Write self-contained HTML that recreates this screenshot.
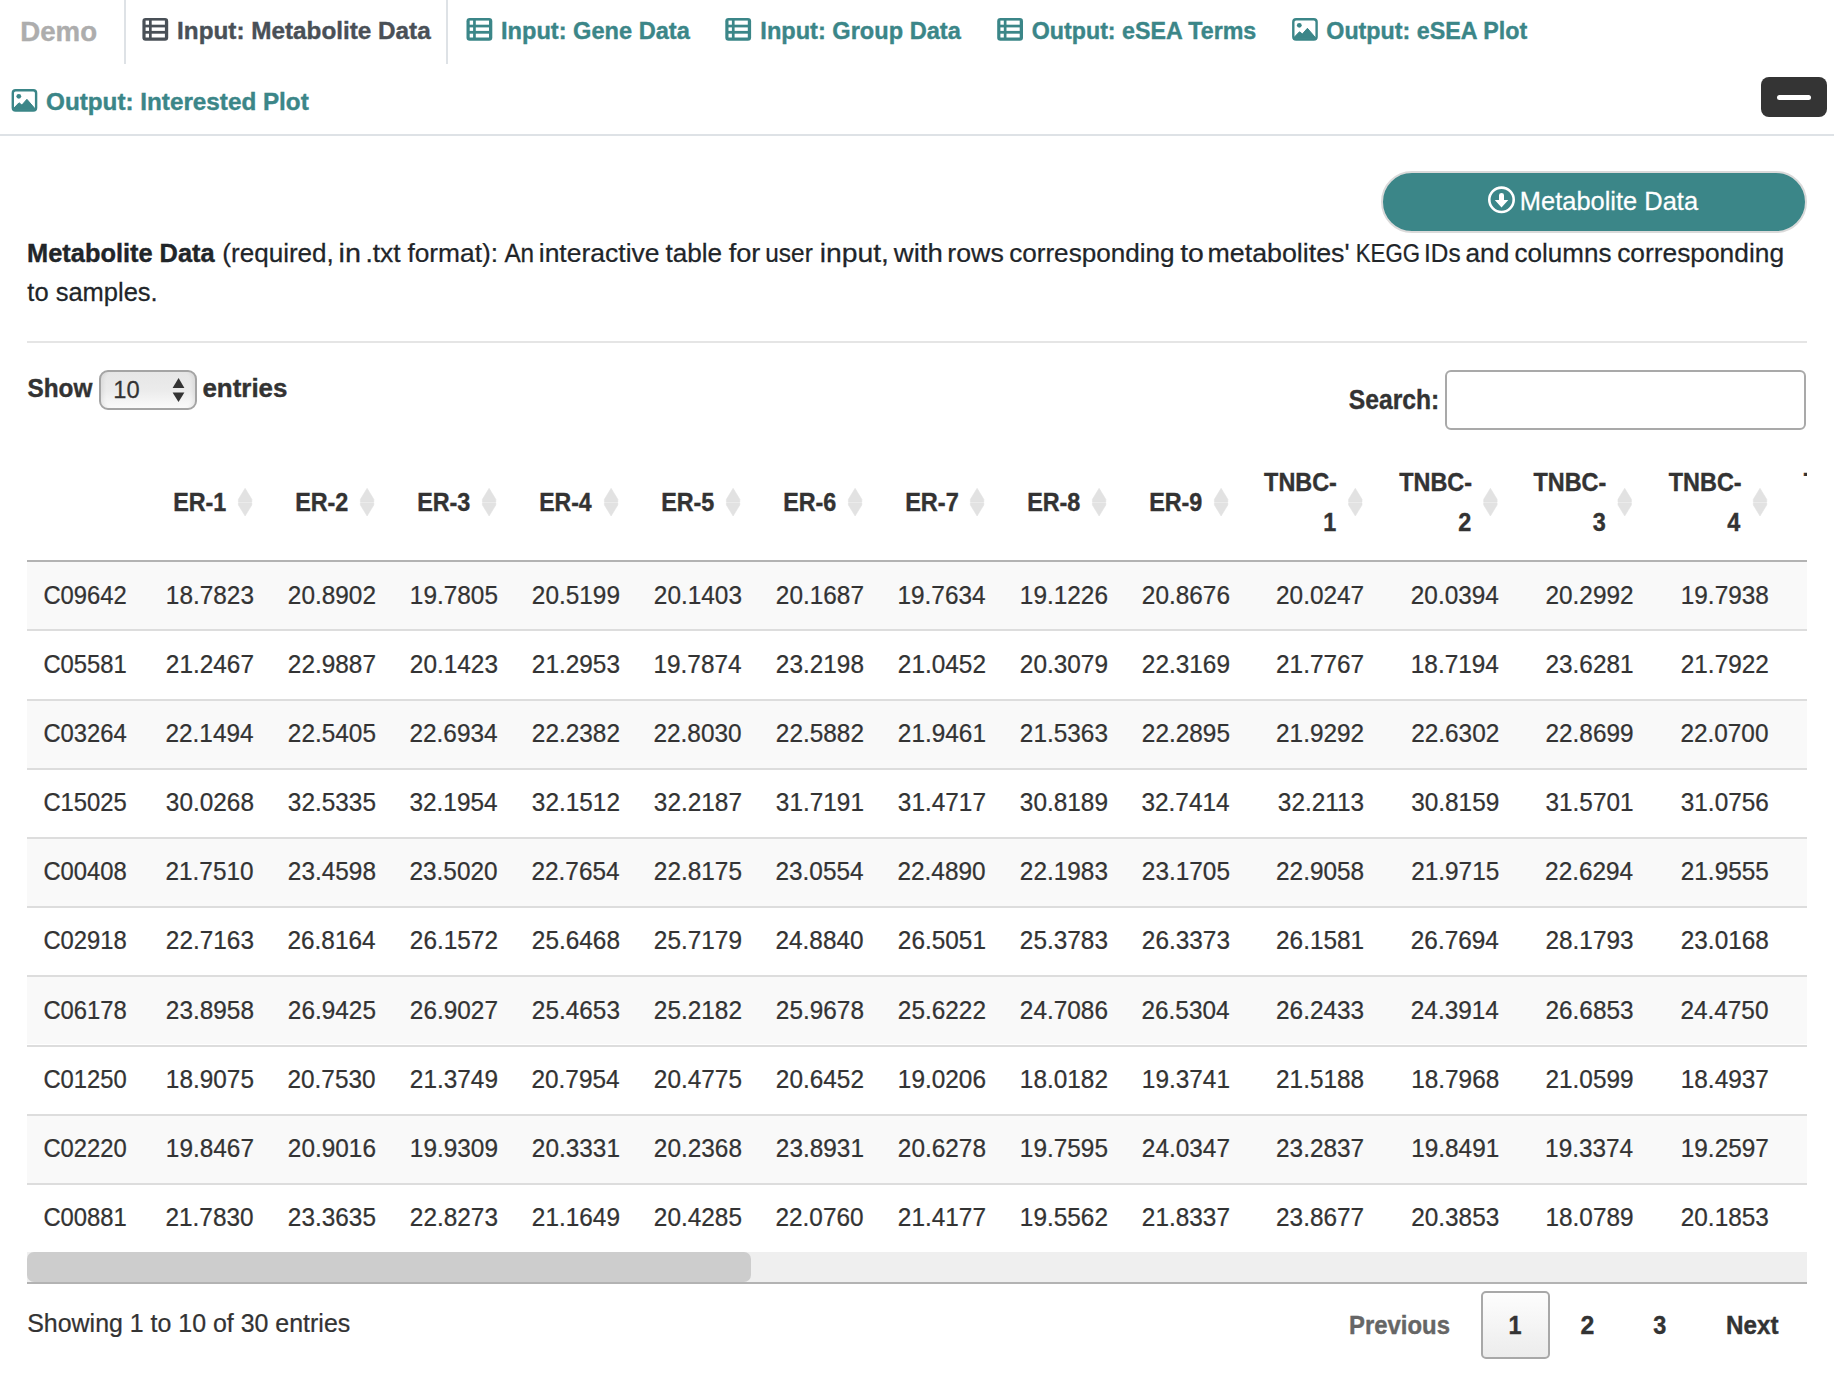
<!DOCTYPE html>
<html><head><meta charset="utf-8"><title>Metabolite Data</title>
<style>
html,body{margin:0;padding:0;background:#fff;}
body{width:1834px;height:1376px;position:relative;overflow:hidden;font-family:"Liberation Sans",sans-serif;}
.abs{position:absolute;}
.tabb{position:absolute;top:0;width:2px;height:63.5px;background:#dee2e6;}
.hdrline{position:absolute;left:0;top:134px;width:1834px;height:2px;background:#dee2e6;}
.minus{position:absolute;left:1761px;top:77px;width:66px;height:40px;border-radius:8px;background:#343434;}
.minus i{position:absolute;left:16px;top:18px;width:33.5px;height:5.2px;border-radius:3px;background:#fff;}
.dl{position:absolute;left:1381px;top:170.5px;width:426px;height:62.5px;box-sizing:border-box;border-radius:32px;background:#3b8688;border:2px solid #dadada;}
.hr{position:absolute;left:27px;top:341px;width:1780px;height:2px;background:#e5e5e5;}
.sel{position:absolute;left:99.3px;top:370px;width:97.3px;height:39.5px;box-sizing:border-box;border:2px solid #a4a4a4;border-radius:9px;background:linear-gradient(#e6e6e6,#ebebeb 50%,#fafafa);box-shadow:inset 5px 0 4px -3px rgba(0,0,0,0.07), inset -5px 0 4px -3px rgba(0,0,0,0.07);}
.search{position:absolute;left:1444.6px;top:370.4px;width:361.6px;height:59.6px;box-sizing:border-box;border:2px solid #a9a9a9;border-radius:6px;background:#fff;}
.thl{position:absolute;left:27px;top:560px;width:1780px;height:2px;background:#b3b3b3;}
.st{position:absolute;left:27px;width:1780px;background:#f9f9f9;}
.rl{position:absolute;left:27px;width:1780px;height:2px;background:#dddddd;}
.track{position:absolute;left:27px;top:1252px;width:1780px;height:30px;background:#efefef;}
.thumb{position:absolute;left:27px;top:1252px;width:724px;height:29.5px;border-radius:7px;background:#cdcdcd;}
.sbl{position:absolute;left:27px;top:1282px;width:1780px;height:2px;background:#b3b3b3;}
.pg1{position:absolute;left:1481px;top:1291px;width:68.5px;height:67.5px;box-sizing:border-box;border:2px solid #a8a8a8;border-radius:5px;background:linear-gradient(#fdfdfd,#ececec);}
svg{position:absolute;left:0;top:0;}
</style></head>
<body>
<div class="tabb" style="left:124px"></div>
<div class="tabb" style="left:446px"></div>
<div class="minus"><i></i></div>
<div class="hdrline"></div>
<div class="dl"></div>
<div class="hr"></div>
<div class="sel"></div>
<div class="search"></div>
<div class="st" style="top:562.0px;height:67.3px"></div><div class="st" style="top:700.5px;height:67.2px"></div><div class="st" style="top:838.9px;height:67.2px"></div><div class="st" style="top:977.3px;height:67.2px"></div><div class="st" style="top:1115.7px;height:67.2px"></div>
<div class="rl" style="top:629.3px"></div><div class="rl" style="top:698.5px"></div><div class="rl" style="top:767.7px"></div><div class="rl" style="top:836.9px"></div><div class="rl" style="top:906.1px"></div><div class="rl" style="top:975.3px"></div><div class="rl" style="top:1044.5px"></div><div class="rl" style="top:1113.7px"></div><div class="rl" style="top:1182.9px"></div>
<div class="thl"></div>
<div class="track"></div>
<div class="thumb"></div>
<div class="sbl"></div>
<div class="pg1"></div>
<svg width="1834" height="1376" viewBox="0 0 1834 1376" font-family="'Liberation Sans', sans-serif">
<defs><clipPath id="tblclip"><rect x="27" y="440" width="1780" height="820"/></clipPath></defs>
<g transform="translate(142.4 18)"><rect x="0" y="0" width="25.8" height="22.7" rx="3.2" fill="#495057"/><g fill="#fff"><rect x="3.2" y="2.6" width="3.4" height="4.1"/><rect x="9.3" y="2.6" width="13.2" height="4.1"/><rect x="3.2" y="9.4" width="3.4" height="3.5"/><rect x="9.3" y="9.4" width="13.2" height="3.5"/><rect x="3.2" y="15.7" width="3.4" height="3.8"/><rect x="9.3" y="15.7" width="13.2" height="3.8"/></g></g>
<g transform="translate(466.5 18)"><rect x="0" y="0" width="25.8" height="22.7" rx="3.2" fill="#3b8688"/><g fill="#fff"><rect x="3.2" y="2.6" width="3.4" height="4.1"/><rect x="9.3" y="2.6" width="13.2" height="4.1"/><rect x="3.2" y="9.4" width="3.4" height="3.5"/><rect x="9.3" y="9.4" width="13.2" height="3.5"/><rect x="3.2" y="15.7" width="3.4" height="3.8"/><rect x="9.3" y="15.7" width="13.2" height="3.8"/></g></g>
<g transform="translate(725.3 18)"><rect x="0" y="0" width="25.8" height="22.7" rx="3.2" fill="#3b8688"/><g fill="#fff"><rect x="3.2" y="2.6" width="3.4" height="4.1"/><rect x="9.3" y="2.6" width="13.2" height="4.1"/><rect x="3.2" y="9.4" width="3.4" height="3.5"/><rect x="9.3" y="9.4" width="13.2" height="3.5"/><rect x="3.2" y="15.7" width="3.4" height="3.8"/><rect x="9.3" y="15.7" width="13.2" height="3.8"/></g></g>
<g transform="translate(997.2 18)"><rect x="0" y="0" width="25.8" height="22.7" rx="3.2" fill="#3b8688"/><g fill="#fff"><rect x="3.2" y="2.6" width="3.4" height="4.1"/><rect x="9.3" y="2.6" width="13.2" height="4.1"/><rect x="3.2" y="9.4" width="3.4" height="3.5"/><rect x="9.3" y="9.4" width="13.2" height="3.5"/><rect x="3.2" y="15.7" width="3.4" height="3.8"/><rect x="9.3" y="15.7" width="13.2" height="3.8"/></g></g>
<g transform="translate(1292.1 18.0)"><rect x="1.2" y="1.2" width="23.3" height="20.3" rx="2.8" fill="none" stroke="#3b8688" stroke-width="2.4"/><circle cx="7.2" cy="7.3" r="2.4" fill="#3b8688"/><path d="M1.6 20.8 L1.8 19.6 L7.4 13.8 L10.3 16.0 L15.3 10.3 L23.3 19.6 L23.5 20.8 Z" fill="#3b8688" stroke="#3b8688" stroke-width="1" stroke-linejoin="round"/></g>
<g transform="translate(11.6 89.0)"><rect x="1.2" y="1.2" width="23.3" height="20.3" rx="2.8" fill="none" stroke="#3b8688" stroke-width="2.4"/><circle cx="7.2" cy="7.3" r="2.4" fill="#3b8688"/><path d="M1.6 20.8 L1.8 19.6 L7.4 13.8 L10.3 16.0 L15.3 10.3 L23.3 19.6 L23.5 20.8 Z" fill="#3b8688" stroke="#3b8688" stroke-width="1" stroke-linejoin="round"/></g>
<g fill="#fff"><circle cx="1501.5" cy="199.8" r="12.2" fill="none" stroke="#fff" stroke-width="2.6"/><path d="M1499 195.2 Q1499 192.9 1501.5 192.9 Q1504 192.9 1504 195.2 L1504 200 L1508.3 200 L1501.5 207.6 L1494.8 200 L1499 200 Z"/></g>
<path d="M178.6 387.9 L172.6 387.9 L178.6 378 L184.4 387.9 Z" fill="#333"/>
<path d="M172.6 392.4 L184.4 392.4 L178.5 402 Z" fill="#333"/>
<path d="M245.1 488.3 L251.8 499.3 L251.8 502 L238.4 502 L238.4 499.3 Z M238.4 502.8 L251.8 502.8 L251.8 505 L245.1 516 L238.4 505 Z" fill="#e2e2e2" stroke="#e2e2e2" stroke-width="0.6" stroke-linejoin="round"/><path d="M367.1 488.3 L373.8 499.3 L373.8 502 L360.4 502 L360.4 499.3 Z M360.4 502.8 L373.8 502.8 L373.8 505 L367.1 516 L360.4 505 Z" fill="#e2e2e2" stroke="#e2e2e2" stroke-width="0.6" stroke-linejoin="round"/><path d="M489.1 488.3 L495.8 499.3 L495.8 502 L482.4 502 L482.4 499.3 Z M482.4 502.8 L495.8 502.8 L495.8 505 L489.1 516 L482.4 505 Z" fill="#e2e2e2" stroke="#e2e2e2" stroke-width="0.6" stroke-linejoin="round"/><path d="M611.1 488.3 L617.8 499.3 L617.8 502 L604.4 502 L604.4 499.3 Z M604.4 502.8 L617.8 502.8 L617.8 505 L611.1 516 L604.4 505 Z" fill="#e2e2e2" stroke="#e2e2e2" stroke-width="0.6" stroke-linejoin="round"/><path d="M733.1 488.3 L739.8 499.3 L739.8 502 L726.4 502 L726.4 499.3 Z M726.4 502.8 L739.8 502.8 L739.8 505 L733.1 516 L726.4 505 Z" fill="#e2e2e2" stroke="#e2e2e2" stroke-width="0.6" stroke-linejoin="round"/><path d="M855.1 488.3 L861.8 499.3 L861.8 502 L848.4 502 L848.4 499.3 Z M848.4 502.8 L861.8 502.8 L861.8 505 L855.1 516 L848.4 505 Z" fill="#e2e2e2" stroke="#e2e2e2" stroke-width="0.6" stroke-linejoin="round"/><path d="M977.1 488.3 L983.8 499.3 L983.8 502 L970.4 502 L970.4 499.3 Z M970.4 502.8 L983.8 502.8 L983.8 505 L977.1 516 L970.4 505 Z" fill="#e2e2e2" stroke="#e2e2e2" stroke-width="0.6" stroke-linejoin="round"/><path d="M1099.1 488.3 L1105.8 499.3 L1105.8 502 L1092.4 502 L1092.4 499.3 Z M1092.4 502.8 L1105.8 502.8 L1105.8 505 L1099.1 516 L1092.4 505 Z" fill="#e2e2e2" stroke="#e2e2e2" stroke-width="0.6" stroke-linejoin="round"/><path d="M1221.1 488.3 L1227.8 499.3 L1227.8 502 L1214.4 502 L1214.4 499.3 Z M1214.4 502.8 L1227.8 502.8 L1227.8 505 L1221.1 516 L1214.4 505 Z" fill="#e2e2e2" stroke="#e2e2e2" stroke-width="0.6" stroke-linejoin="round"/><path d="M1355.3 488.3 L1362.0 499.3 L1362.0 502 L1348.6 502 L1348.6 499.3 Z M1348.6 502.8 L1362.0 502.8 L1362.0 505 L1355.3 516 L1348.6 505 Z" fill="#e2e2e2" stroke="#e2e2e2" stroke-width="0.6" stroke-linejoin="round"/><path d="M1490.4 488.3 L1497.1 499.3 L1497.1 502 L1483.7 502 L1483.7 499.3 Z M1483.7 502.8 L1497.1 502.8 L1497.1 505 L1490.4 516 L1483.7 505 Z" fill="#e2e2e2" stroke="#e2e2e2" stroke-width="0.6" stroke-linejoin="round"/><path d="M1624.7 488.3 L1631.4 499.3 L1631.4 502 L1618.0 502 L1618.0 499.3 Z M1618.0 502.8 L1631.4 502.8 L1631.4 505 L1624.7 516 L1618.0 505 Z" fill="#e2e2e2" stroke="#e2e2e2" stroke-width="0.6" stroke-linejoin="round"/><path d="M1760.0 488.3 L1766.7 499.3 L1766.7 502 L1753.3 502 L1753.3 499.3 Z M1753.3 502.8 L1766.7 502.8 L1766.7 505 L1760.0 516 L1753.3 505 Z" fill="#e2e2e2" stroke="#e2e2e2" stroke-width="0.6" stroke-linejoin="round"/>
<text transform="translate(20.27 40.60) scale(0.9919 1)" font-size="27.88" font-weight="bold" fill="#adadad" stroke="#adadad" stroke-width="0.40">Demo</text>
<text transform="translate(177.08 39.30) scale(0.9873 1)" font-size="24.61" font-weight="bold" fill="#495057" stroke="#495057" stroke-width="0.40">Input: Metabolite Data</text>
<text transform="translate(501.02 39.30) scale(0.9591 1)" font-size="24.61" font-weight="bold" fill="#3b8688" stroke="#3b8688" stroke-width="0.40">Input: Gene Data</text>
<text transform="translate(760.33 39.30) scale(0.9588 1)" font-size="24.61" font-weight="bold" fill="#3b8688" stroke="#3b8688" stroke-width="0.40">Input: Group Data</text>
<text transform="translate(1031.77 39.30) scale(0.9441 1)" font-size="24.61" font-weight="bold" fill="#3b8688" stroke="#3b8688" stroke-width="0.40">Output: eSEA Terms</text>
<text transform="translate(1326.27 39.30) scale(0.9465 1)" font-size="24.61" font-weight="bold" fill="#3b8688" stroke="#3b8688" stroke-width="0.40">Output: eSEA Plot</text>
<text transform="translate(46.04 109.80) scale(0.9861 1)" font-size="24.61" font-weight="bold" fill="#3b8688" stroke="#3b8688" stroke-width="0.40">Output: Interested Plot</text>
<text transform="translate(1519.81 209.80) scale(0.9950 1)" font-size="25.60" font-weight="normal" fill="#ffffff" stroke="#ffffff" stroke-width="0.25">Metabolite Data</text>
<text transform="translate(27.11 262.00) scale(0.9700 1)" font-size="26.17" font-weight="bold" fill="#212529" stroke="#212529" stroke-width="0.40">Metabolite Data</text>
<text transform="translate(222.28 262.00) scale(0.9969 1)" font-size="26.17" font-weight="normal" fill="#212529" stroke="#212529" stroke-width="0.25">(required,</text>
<text transform="translate(338.60 262.00) scale(1.1004 1)" font-size="26.17" font-weight="normal" fill="#212529" stroke="#212529" stroke-width="0.25">in</text>
<text transform="translate(365.43 262.00) scale(1.0107 1)" font-size="26.17" font-weight="normal" fill="#212529" stroke="#212529" stroke-width="0.25">.txt</text>
<text transform="translate(407.40 262.00) scale(1.0057 1)" font-size="26.17" font-weight="normal" fill="#212529" stroke="#212529" stroke-width="0.25">format):</text>
<text transform="translate(504.40 262.00) scale(0.9298 1)" font-size="26.17" font-weight="normal" fill="#212529" stroke="#212529" stroke-width="0.25">An</text>
<text transform="translate(538.74 262.00) scale(1.0129 1)" font-size="26.17" font-weight="normal" fill="#212529" stroke="#212529" stroke-width="0.25">interactive</text>
<text transform="translate(665.40 262.00) scale(0.9983 1)" font-size="26.17" font-weight="normal" fill="#212529" stroke="#212529" stroke-width="0.25">table</text>
<text transform="translate(728.70 262.00) scale(1.0389 1)" font-size="26.17" font-weight="normal" fill="#212529" stroke="#212529" stroke-width="0.25">for</text>
<text transform="translate(765.27 262.00) scale(0.9338 1)" font-size="26.17" font-weight="normal" fill="#212529" stroke="#212529" stroke-width="0.25">user</text>
<text transform="translate(819.63 262.00) scale(1.0821 1)" font-size="26.17" font-weight="normal" fill="#212529" stroke="#212529" stroke-width="0.25">input,</text>
<text transform="translate(893.73 262.00) scale(1.0553 1)" font-size="26.17" font-weight="normal" fill="#212529" stroke="#212529" stroke-width="0.25">with</text>
<text transform="translate(947.33 262.00) scale(1.0226 1)" font-size="26.17" font-weight="normal" fill="#212529" stroke="#212529" stroke-width="0.25">rows</text>
<text transform="translate(1009.18 262.00) scale(0.9976 1)" font-size="26.17" font-weight="normal" fill="#212529" stroke="#212529" stroke-width="0.25">corresponding</text>
<text transform="translate(1180.20 262.00) scale(1.0834 1)" font-size="26.17" font-weight="normal" fill="#212529" stroke="#212529" stroke-width="0.25">to</text>
<text transform="translate(1207.53 262.00) scale(1.0236 1)" font-size="26.17" font-weight="normal" fill="#212529" stroke="#212529" stroke-width="0.25">metabolites&#x27;</text>
<text transform="translate(1355.76 262.00) scale(0.8502 1)" font-size="26.17" font-weight="normal" fill="#212529" stroke="#212529" stroke-width="0.25">KEGG</text>
<text transform="translate(1424.10 262.00) scale(0.9286 1)" font-size="26.17" font-weight="normal" fill="#212529" stroke="#212529" stroke-width="0.25">IDs</text>
<text transform="translate(1465.48 262.00) scale(1.0029 1)" font-size="26.17" font-weight="normal" fill="#212529" stroke="#212529" stroke-width="0.25">and</text>
<text transform="translate(1514.59 262.00) scale(0.9945 1)" font-size="26.17" font-weight="normal" fill="#212529" stroke="#212529" stroke-width="0.25">columns</text>
<text transform="translate(1617.18 262.00) scale(1.0062 1)" font-size="26.17" font-weight="normal" fill="#212529" stroke="#212529" stroke-width="0.25">corresponding</text>
<text transform="translate(27.30 301.40) scale(0.9751 1)" font-size="26.17" font-weight="normal" fill="#212529" stroke="#212529" stroke-width="0.25">to samples.</text>
<text transform="translate(27.52 397.40) scale(0.9401 1)" font-size="25.89" font-weight="bold" fill="#333333" stroke="#333333" stroke-width="0.40">Show</text>
<text transform="translate(113.22 397.90) scale(0.9579 1)" font-size="24.75" font-weight="normal" fill="#333333" stroke="#333333" stroke-width="0.25">10</text>
<text transform="translate(202.39 397.40) scale(1.0019 1)" font-size="25.89" font-weight="bold" fill="#333333" stroke="#333333" stroke-width="0.40">entries</text>
<text transform="translate(1348.81 408.60) scale(0.9121 1)" font-size="27.03" font-weight="bold" fill="#333333" stroke="#333333" stroke-width="0.40">Search:</text>
<text transform="translate(173.14 511.30) scale(0.9127 1)" font-size="25.60" font-weight="bold" fill="#333333" stroke="#333333" stroke-width="0.40">ER-1</text>
<text transform="translate(295.14 511.30) scale(0.9127 1)" font-size="25.60" font-weight="bold" fill="#333333" stroke="#333333" stroke-width="0.40">ER-2</text>
<text transform="translate(417.14 511.30) scale(0.9127 1)" font-size="25.60" font-weight="bold" fill="#333333" stroke="#333333" stroke-width="0.40">ER-3</text>
<text transform="translate(539.16 511.30) scale(0.8999 1)" font-size="25.60" font-weight="bold" fill="#333333" stroke="#333333" stroke-width="0.40">ER-4</text>
<text transform="translate(661.14 511.30) scale(0.9127 1)" font-size="25.60" font-weight="bold" fill="#333333" stroke="#333333" stroke-width="0.40">ER-5</text>
<text transform="translate(783.14 511.30) scale(0.9127 1)" font-size="25.60" font-weight="bold" fill="#333333" stroke="#333333" stroke-width="0.40">ER-6</text>
<text transform="translate(905.13 511.30) scale(0.9193 1)" font-size="25.60" font-weight="bold" fill="#333333" stroke="#333333" stroke-width="0.40">ER-7</text>
<text transform="translate(1027.14 511.30) scale(0.9127 1)" font-size="25.60" font-weight="bold" fill="#333333" stroke="#333333" stroke-width="0.40">ER-8</text>
<text transform="translate(1149.14 511.30) scale(0.9127 1)" font-size="25.60" font-weight="bold" fill="#333333" stroke="#333333" stroke-width="0.40">ER-9</text>
<g clip-path="url(#tblclip)"><text transform="translate(1264.10 490.80) scale(0.9147 1)" font-size="25.60" font-weight="bold" fill="#333333" stroke="#333333" stroke-width="0.40">TNBC-</text></g>
<text transform="translate(1323.26 530.70) scale(0.9147 1)" font-size="25.60" font-weight="bold" fill="#333333" stroke="#333333" stroke-width="0.40">1</text>
<g clip-path="url(#tblclip)"><text transform="translate(1399.20 490.80) scale(0.9147 1)" font-size="25.60" font-weight="bold" fill="#333333" stroke="#333333" stroke-width="0.40">TNBC-</text></g>
<text transform="translate(1458.36 530.70) scale(0.9147 1)" font-size="25.60" font-weight="bold" fill="#333333" stroke="#333333" stroke-width="0.40">2</text>
<g clip-path="url(#tblclip)"><text transform="translate(1533.50 490.80) scale(0.9147 1)" font-size="25.60" font-weight="bold" fill="#333333" stroke="#333333" stroke-width="0.40">TNBC-</text></g>
<text transform="translate(1592.66 530.70) scale(0.9147 1)" font-size="25.60" font-weight="bold" fill="#333333" stroke="#333333" stroke-width="0.40">3</text>
<g clip-path="url(#tblclip)"><text transform="translate(1668.80 490.80) scale(0.9147 1)" font-size="25.60" font-weight="bold" fill="#333333" stroke="#333333" stroke-width="0.40">TNBC-</text></g>
<text transform="translate(1727.23 530.70) scale(0.9147 1)" font-size="25.60" font-weight="bold" fill="#333333" stroke="#333333" stroke-width="0.40">4</text>
<g clip-path="url(#tblclip)"><text transform="translate(1803.80 490.80) scale(0.9147 1)" font-size="25.60" font-weight="bold" fill="#333333" stroke="#333333" stroke-width="0.40">TNBC-</text></g>
<text transform="translate(43.38 603.70) scale(0.9401 1)" font-size="25.32" font-weight="normal" fill="#333333" stroke="#333333" stroke-width="0.25">C09642</text>
<text transform="translate(165.86 603.70) scale(0.9629 1)" font-size="25.32" font-weight="normal" fill="#333333" stroke="#333333" stroke-width="0.25">18.7823</text>
<text transform="translate(287.86 603.70) scale(0.9629 1)" font-size="25.32" font-weight="normal" fill="#333333" stroke="#333333" stroke-width="0.25">20.8902</text>
<text transform="translate(409.86 603.70) scale(0.9629 1)" font-size="25.32" font-weight="normal" fill="#333333" stroke="#333333" stroke-width="0.25">19.7805</text>
<text transform="translate(531.86 603.70) scale(0.9629 1)" font-size="25.32" font-weight="normal" fill="#333333" stroke="#333333" stroke-width="0.25">20.5199</text>
<text transform="translate(653.86 603.70) scale(0.9629 1)" font-size="25.32" font-weight="normal" fill="#333333" stroke="#333333" stroke-width="0.25">20.1403</text>
<text transform="translate(775.86 603.70) scale(0.9629 1)" font-size="25.32" font-weight="normal" fill="#333333" stroke="#333333" stroke-width="0.25">20.1687</text>
<text transform="translate(897.48 603.70) scale(0.9629 1)" font-size="25.32" font-weight="normal" fill="#333333" stroke="#333333" stroke-width="0.25">19.7634</text>
<text transform="translate(1019.86 603.70) scale(0.9629 1)" font-size="25.32" font-weight="normal" fill="#333333" stroke="#333333" stroke-width="0.25">19.1226</text>
<text transform="translate(1141.86 603.70) scale(0.9629 1)" font-size="25.32" font-weight="normal" fill="#333333" stroke="#333333" stroke-width="0.25">20.8676</text>
<text transform="translate(1276.06 603.70) scale(0.9629 1)" font-size="25.32" font-weight="normal" fill="#333333" stroke="#333333" stroke-width="0.25">20.0247</text>
<text transform="translate(1410.78 603.70) scale(0.9629 1)" font-size="25.32" font-weight="normal" fill="#333333" stroke="#333333" stroke-width="0.25">20.0394</text>
<text transform="translate(1545.46 603.70) scale(0.9629 1)" font-size="25.32" font-weight="normal" fill="#333333" stroke="#333333" stroke-width="0.25">20.2992</text>
<text transform="translate(1680.76 603.70) scale(0.9629 1)" font-size="25.32" font-weight="normal" fill="#333333" stroke="#333333" stroke-width="0.25">19.7938</text>
<text transform="translate(43.38 672.85) scale(0.9401 1)" font-size="25.32" font-weight="normal" fill="#333333" stroke="#333333" stroke-width="0.25">C05581</text>
<text transform="translate(165.86 672.85) scale(0.9629 1)" font-size="25.32" font-weight="normal" fill="#333333" stroke="#333333" stroke-width="0.25">21.2467</text>
<text transform="translate(287.86 672.85) scale(0.9629 1)" font-size="25.32" font-weight="normal" fill="#333333" stroke="#333333" stroke-width="0.25">22.9887</text>
<text transform="translate(409.86 672.85) scale(0.9629 1)" font-size="25.32" font-weight="normal" fill="#333333" stroke="#333333" stroke-width="0.25">20.1423</text>
<text transform="translate(531.86 672.85) scale(0.9629 1)" font-size="25.32" font-weight="normal" fill="#333333" stroke="#333333" stroke-width="0.25">21.2953</text>
<text transform="translate(653.48 672.85) scale(0.9629 1)" font-size="25.32" font-weight="normal" fill="#333333" stroke="#333333" stroke-width="0.25">19.7874</text>
<text transform="translate(775.86 672.85) scale(0.9629 1)" font-size="25.32" font-weight="normal" fill="#333333" stroke="#333333" stroke-width="0.25">23.2198</text>
<text transform="translate(897.86 672.85) scale(0.9629 1)" font-size="25.32" font-weight="normal" fill="#333333" stroke="#333333" stroke-width="0.25">21.0452</text>
<text transform="translate(1019.86 672.85) scale(0.9629 1)" font-size="25.32" font-weight="normal" fill="#333333" stroke="#333333" stroke-width="0.25">20.3079</text>
<text transform="translate(1141.86 672.85) scale(0.9629 1)" font-size="25.32" font-weight="normal" fill="#333333" stroke="#333333" stroke-width="0.25">22.3169</text>
<text transform="translate(1276.06 672.85) scale(0.9629 1)" font-size="25.32" font-weight="normal" fill="#333333" stroke="#333333" stroke-width="0.25">21.7767</text>
<text transform="translate(1410.78 672.85) scale(0.9629 1)" font-size="25.32" font-weight="normal" fill="#333333" stroke="#333333" stroke-width="0.25">18.7194</text>
<text transform="translate(1545.46 672.85) scale(0.9629 1)" font-size="25.32" font-weight="normal" fill="#333333" stroke="#333333" stroke-width="0.25">23.6281</text>
<text transform="translate(1680.76 672.85) scale(0.9629 1)" font-size="25.32" font-weight="normal" fill="#333333" stroke="#333333" stroke-width="0.25">21.7922</text>
<text transform="translate(43.38 742.00) scale(0.9401 1)" font-size="25.32" font-weight="normal" fill="#333333" stroke="#333333" stroke-width="0.25">C03264</text>
<text transform="translate(165.48 742.00) scale(0.9629 1)" font-size="25.32" font-weight="normal" fill="#333333" stroke="#333333" stroke-width="0.25">22.1494</text>
<text transform="translate(287.86 742.00) scale(0.9629 1)" font-size="25.32" font-weight="normal" fill="#333333" stroke="#333333" stroke-width="0.25">22.5405</text>
<text transform="translate(409.48 742.00) scale(0.9629 1)" font-size="25.32" font-weight="normal" fill="#333333" stroke="#333333" stroke-width="0.25">22.6934</text>
<text transform="translate(531.86 742.00) scale(0.9629 1)" font-size="25.32" font-weight="normal" fill="#333333" stroke="#333333" stroke-width="0.25">22.2382</text>
<text transform="translate(653.48 742.00) scale(0.9629 1)" font-size="25.32" font-weight="normal" fill="#333333" stroke="#333333" stroke-width="0.25">22.8030</text>
<text transform="translate(775.86 742.00) scale(0.9629 1)" font-size="25.32" font-weight="normal" fill="#333333" stroke="#333333" stroke-width="0.25">22.5882</text>
<text transform="translate(897.86 742.00) scale(0.9629 1)" font-size="25.32" font-weight="normal" fill="#333333" stroke="#333333" stroke-width="0.25">21.9461</text>
<text transform="translate(1019.86 742.00) scale(0.9629 1)" font-size="25.32" font-weight="normal" fill="#333333" stroke="#333333" stroke-width="0.25">21.5363</text>
<text transform="translate(1141.86 742.00) scale(0.9629 1)" font-size="25.32" font-weight="normal" fill="#333333" stroke="#333333" stroke-width="0.25">22.2895</text>
<text transform="translate(1276.06 742.00) scale(0.9629 1)" font-size="25.32" font-weight="normal" fill="#333333" stroke="#333333" stroke-width="0.25">21.9292</text>
<text transform="translate(1411.16 742.00) scale(0.9629 1)" font-size="25.32" font-weight="normal" fill="#333333" stroke="#333333" stroke-width="0.25">22.6302</text>
<text transform="translate(1545.46 742.00) scale(0.9629 1)" font-size="25.32" font-weight="normal" fill="#333333" stroke="#333333" stroke-width="0.25">22.8699</text>
<text transform="translate(1680.38 742.00) scale(0.9629 1)" font-size="25.32" font-weight="normal" fill="#333333" stroke="#333333" stroke-width="0.25">22.0700</text>
<text transform="translate(43.38 811.15) scale(0.9401 1)" font-size="25.32" font-weight="normal" fill="#333333" stroke="#333333" stroke-width="0.25">C15025</text>
<text transform="translate(165.86 811.15) scale(0.9629 1)" font-size="25.32" font-weight="normal" fill="#333333" stroke="#333333" stroke-width="0.25">30.0268</text>
<text transform="translate(287.86 811.15) scale(0.9629 1)" font-size="25.32" font-weight="normal" fill="#333333" stroke="#333333" stroke-width="0.25">32.5335</text>
<text transform="translate(409.48 811.15) scale(0.9629 1)" font-size="25.32" font-weight="normal" fill="#333333" stroke="#333333" stroke-width="0.25">32.1954</text>
<text transform="translate(531.86 811.15) scale(0.9629 1)" font-size="25.32" font-weight="normal" fill="#333333" stroke="#333333" stroke-width="0.25">32.1512</text>
<text transform="translate(653.86 811.15) scale(0.9629 1)" font-size="25.32" font-weight="normal" fill="#333333" stroke="#333333" stroke-width="0.25">32.2187</text>
<text transform="translate(775.86 811.15) scale(0.9629 1)" font-size="25.32" font-weight="normal" fill="#333333" stroke="#333333" stroke-width="0.25">31.7191</text>
<text transform="translate(897.86 811.15) scale(0.9629 1)" font-size="25.32" font-weight="normal" fill="#333333" stroke="#333333" stroke-width="0.25">31.4717</text>
<text transform="translate(1019.86 811.15) scale(0.9629 1)" font-size="25.32" font-weight="normal" fill="#333333" stroke="#333333" stroke-width="0.25">30.8189</text>
<text transform="translate(1141.48 811.15) scale(0.9629 1)" font-size="25.32" font-weight="normal" fill="#333333" stroke="#333333" stroke-width="0.25">32.7414</text>
<text transform="translate(1277.87 811.15) scale(0.9629 1)" font-size="25.32" font-weight="normal" fill="#333333" stroke="#333333" stroke-width="0.25">32.2113</text>
<text transform="translate(1411.16 811.15) scale(0.9629 1)" font-size="25.32" font-weight="normal" fill="#333333" stroke="#333333" stroke-width="0.25">30.8159</text>
<text transform="translate(1545.46 811.15) scale(0.9629 1)" font-size="25.32" font-weight="normal" fill="#333333" stroke="#333333" stroke-width="0.25">31.5701</text>
<text transform="translate(1680.76 811.15) scale(0.9629 1)" font-size="25.32" font-weight="normal" fill="#333333" stroke="#333333" stroke-width="0.25">31.0756</text>
<text transform="translate(43.38 880.30) scale(0.9401 1)" font-size="25.32" font-weight="normal" fill="#333333" stroke="#333333" stroke-width="0.25">C00408</text>
<text transform="translate(165.48 880.30) scale(0.9629 1)" font-size="25.32" font-weight="normal" fill="#333333" stroke="#333333" stroke-width="0.25">21.7510</text>
<text transform="translate(287.86 880.30) scale(0.9629 1)" font-size="25.32" font-weight="normal" fill="#333333" stroke="#333333" stroke-width="0.25">23.4598</text>
<text transform="translate(409.48 880.30) scale(0.9629 1)" font-size="25.32" font-weight="normal" fill="#333333" stroke="#333333" stroke-width="0.25">23.5020</text>
<text transform="translate(531.48 880.30) scale(0.9629 1)" font-size="25.32" font-weight="normal" fill="#333333" stroke="#333333" stroke-width="0.25">22.7654</text>
<text transform="translate(653.86 880.30) scale(0.9629 1)" font-size="25.32" font-weight="normal" fill="#333333" stroke="#333333" stroke-width="0.25">22.8175</text>
<text transform="translate(775.48 880.30) scale(0.9629 1)" font-size="25.32" font-weight="normal" fill="#333333" stroke="#333333" stroke-width="0.25">23.0554</text>
<text transform="translate(897.48 880.30) scale(0.9629 1)" font-size="25.32" font-weight="normal" fill="#333333" stroke="#333333" stroke-width="0.25">22.4890</text>
<text transform="translate(1019.86 880.30) scale(0.9629 1)" font-size="25.32" font-weight="normal" fill="#333333" stroke="#333333" stroke-width="0.25">22.1983</text>
<text transform="translate(1141.86 880.30) scale(0.9629 1)" font-size="25.32" font-weight="normal" fill="#333333" stroke="#333333" stroke-width="0.25">23.1705</text>
<text transform="translate(1276.06 880.30) scale(0.9629 1)" font-size="25.32" font-weight="normal" fill="#333333" stroke="#333333" stroke-width="0.25">22.9058</text>
<text transform="translate(1411.16 880.30) scale(0.9629 1)" font-size="25.32" font-weight="normal" fill="#333333" stroke="#333333" stroke-width="0.25">21.9715</text>
<text transform="translate(1545.08 880.30) scale(0.9629 1)" font-size="25.32" font-weight="normal" fill="#333333" stroke="#333333" stroke-width="0.25">22.6294</text>
<text transform="translate(1680.76 880.30) scale(0.9629 1)" font-size="25.32" font-weight="normal" fill="#333333" stroke="#333333" stroke-width="0.25">21.9555</text>
<text transform="translate(43.38 949.45) scale(0.9401 1)" font-size="25.32" font-weight="normal" fill="#333333" stroke="#333333" stroke-width="0.25">C02918</text>
<text transform="translate(165.86 949.45) scale(0.9629 1)" font-size="25.32" font-weight="normal" fill="#333333" stroke="#333333" stroke-width="0.25">22.7163</text>
<text transform="translate(287.48 949.45) scale(0.9629 1)" font-size="25.32" font-weight="normal" fill="#333333" stroke="#333333" stroke-width="0.25">26.8164</text>
<text transform="translate(409.86 949.45) scale(0.9629 1)" font-size="25.32" font-weight="normal" fill="#333333" stroke="#333333" stroke-width="0.25">26.1572</text>
<text transform="translate(531.86 949.45) scale(0.9629 1)" font-size="25.32" font-weight="normal" fill="#333333" stroke="#333333" stroke-width="0.25">25.6468</text>
<text transform="translate(653.86 949.45) scale(0.9629 1)" font-size="25.32" font-weight="normal" fill="#333333" stroke="#333333" stroke-width="0.25">25.7179</text>
<text transform="translate(775.48 949.45) scale(0.9629 1)" font-size="25.32" font-weight="normal" fill="#333333" stroke="#333333" stroke-width="0.25">24.8840</text>
<text transform="translate(897.86 949.45) scale(0.9629 1)" font-size="25.32" font-weight="normal" fill="#333333" stroke="#333333" stroke-width="0.25">26.5051</text>
<text transform="translate(1019.86 949.45) scale(0.9629 1)" font-size="25.32" font-weight="normal" fill="#333333" stroke="#333333" stroke-width="0.25">25.3783</text>
<text transform="translate(1141.86 949.45) scale(0.9629 1)" font-size="25.32" font-weight="normal" fill="#333333" stroke="#333333" stroke-width="0.25">26.3373</text>
<text transform="translate(1276.06 949.45) scale(0.9629 1)" font-size="25.32" font-weight="normal" fill="#333333" stroke="#333333" stroke-width="0.25">26.1581</text>
<text transform="translate(1410.78 949.45) scale(0.9629 1)" font-size="25.32" font-weight="normal" fill="#333333" stroke="#333333" stroke-width="0.25">26.7694</text>
<text transform="translate(1545.46 949.45) scale(0.9629 1)" font-size="25.32" font-weight="normal" fill="#333333" stroke="#333333" stroke-width="0.25">28.1793</text>
<text transform="translate(1680.76 949.45) scale(0.9629 1)" font-size="25.32" font-weight="normal" fill="#333333" stroke="#333333" stroke-width="0.25">23.0168</text>
<text transform="translate(43.38 1018.60) scale(0.9401 1)" font-size="25.32" font-weight="normal" fill="#333333" stroke="#333333" stroke-width="0.25">C06178</text>
<text transform="translate(165.86 1018.60) scale(0.9629 1)" font-size="25.32" font-weight="normal" fill="#333333" stroke="#333333" stroke-width="0.25">23.8958</text>
<text transform="translate(287.86 1018.60) scale(0.9629 1)" font-size="25.32" font-weight="normal" fill="#333333" stroke="#333333" stroke-width="0.25">26.9425</text>
<text transform="translate(409.86 1018.60) scale(0.9629 1)" font-size="25.32" font-weight="normal" fill="#333333" stroke="#333333" stroke-width="0.25">26.9027</text>
<text transform="translate(531.86 1018.60) scale(0.9629 1)" font-size="25.32" font-weight="normal" fill="#333333" stroke="#333333" stroke-width="0.25">25.4653</text>
<text transform="translate(653.86 1018.60) scale(0.9629 1)" font-size="25.32" font-weight="normal" fill="#333333" stroke="#333333" stroke-width="0.25">25.2182</text>
<text transform="translate(775.86 1018.60) scale(0.9629 1)" font-size="25.32" font-weight="normal" fill="#333333" stroke="#333333" stroke-width="0.25">25.9678</text>
<text transform="translate(897.86 1018.60) scale(0.9629 1)" font-size="25.32" font-weight="normal" fill="#333333" stroke="#333333" stroke-width="0.25">25.6222</text>
<text transform="translate(1019.86 1018.60) scale(0.9629 1)" font-size="25.32" font-weight="normal" fill="#333333" stroke="#333333" stroke-width="0.25">24.7086</text>
<text transform="translate(1141.48 1018.60) scale(0.9629 1)" font-size="25.32" font-weight="normal" fill="#333333" stroke="#333333" stroke-width="0.25">26.5304</text>
<text transform="translate(1276.06 1018.60) scale(0.9629 1)" font-size="25.32" font-weight="normal" fill="#333333" stroke="#333333" stroke-width="0.25">26.2433</text>
<text transform="translate(1410.78 1018.60) scale(0.9629 1)" font-size="25.32" font-weight="normal" fill="#333333" stroke="#333333" stroke-width="0.25">24.3914</text>
<text transform="translate(1545.46 1018.60) scale(0.9629 1)" font-size="25.32" font-weight="normal" fill="#333333" stroke="#333333" stroke-width="0.25">26.6853</text>
<text transform="translate(1680.38 1018.60) scale(0.9629 1)" font-size="25.32" font-weight="normal" fill="#333333" stroke="#333333" stroke-width="0.25">24.4750</text>
<text transform="translate(43.38 1087.75) scale(0.9401 1)" font-size="25.32" font-weight="normal" fill="#333333" stroke="#333333" stroke-width="0.25">C01250</text>
<text transform="translate(165.86 1087.75) scale(0.9629 1)" font-size="25.32" font-weight="normal" fill="#333333" stroke="#333333" stroke-width="0.25">18.9075</text>
<text transform="translate(287.48 1087.75) scale(0.9629 1)" font-size="25.32" font-weight="normal" fill="#333333" stroke="#333333" stroke-width="0.25">20.7530</text>
<text transform="translate(409.86 1087.75) scale(0.9629 1)" font-size="25.32" font-weight="normal" fill="#333333" stroke="#333333" stroke-width="0.25">21.3749</text>
<text transform="translate(531.48 1087.75) scale(0.9629 1)" font-size="25.32" font-weight="normal" fill="#333333" stroke="#333333" stroke-width="0.25">20.7954</text>
<text transform="translate(653.86 1087.75) scale(0.9629 1)" font-size="25.32" font-weight="normal" fill="#333333" stroke="#333333" stroke-width="0.25">20.4775</text>
<text transform="translate(775.86 1087.75) scale(0.9629 1)" font-size="25.32" font-weight="normal" fill="#333333" stroke="#333333" stroke-width="0.25">20.6452</text>
<text transform="translate(897.86 1087.75) scale(0.9629 1)" font-size="25.32" font-weight="normal" fill="#333333" stroke="#333333" stroke-width="0.25">19.0206</text>
<text transform="translate(1019.86 1087.75) scale(0.9629 1)" font-size="25.32" font-weight="normal" fill="#333333" stroke="#333333" stroke-width="0.25">18.0182</text>
<text transform="translate(1141.86 1087.75) scale(0.9629 1)" font-size="25.32" font-weight="normal" fill="#333333" stroke="#333333" stroke-width="0.25">19.3741</text>
<text transform="translate(1276.06 1087.75) scale(0.9629 1)" font-size="25.32" font-weight="normal" fill="#333333" stroke="#333333" stroke-width="0.25">21.5188</text>
<text transform="translate(1411.16 1087.75) scale(0.9629 1)" font-size="25.32" font-weight="normal" fill="#333333" stroke="#333333" stroke-width="0.25">18.7968</text>
<text transform="translate(1545.46 1087.75) scale(0.9629 1)" font-size="25.32" font-weight="normal" fill="#333333" stroke="#333333" stroke-width="0.25">21.0599</text>
<text transform="translate(1680.76 1087.75) scale(0.9629 1)" font-size="25.32" font-weight="normal" fill="#333333" stroke="#333333" stroke-width="0.25">18.4937</text>
<text transform="translate(43.38 1156.90) scale(0.9401 1)" font-size="25.32" font-weight="normal" fill="#333333" stroke="#333333" stroke-width="0.25">C02220</text>
<text transform="translate(165.86 1156.90) scale(0.9629 1)" font-size="25.32" font-weight="normal" fill="#333333" stroke="#333333" stroke-width="0.25">19.8467</text>
<text transform="translate(287.86 1156.90) scale(0.9629 1)" font-size="25.32" font-weight="normal" fill="#333333" stroke="#333333" stroke-width="0.25">20.9016</text>
<text transform="translate(409.86 1156.90) scale(0.9629 1)" font-size="25.32" font-weight="normal" fill="#333333" stroke="#333333" stroke-width="0.25">19.9309</text>
<text transform="translate(531.86 1156.90) scale(0.9629 1)" font-size="25.32" font-weight="normal" fill="#333333" stroke="#333333" stroke-width="0.25">20.3331</text>
<text transform="translate(653.86 1156.90) scale(0.9629 1)" font-size="25.32" font-weight="normal" fill="#333333" stroke="#333333" stroke-width="0.25">20.2368</text>
<text transform="translate(775.86 1156.90) scale(0.9629 1)" font-size="25.32" font-weight="normal" fill="#333333" stroke="#333333" stroke-width="0.25">23.8931</text>
<text transform="translate(897.86 1156.90) scale(0.9629 1)" font-size="25.32" font-weight="normal" fill="#333333" stroke="#333333" stroke-width="0.25">20.6278</text>
<text transform="translate(1019.86 1156.90) scale(0.9629 1)" font-size="25.32" font-weight="normal" fill="#333333" stroke="#333333" stroke-width="0.25">19.7595</text>
<text transform="translate(1141.86 1156.90) scale(0.9629 1)" font-size="25.32" font-weight="normal" fill="#333333" stroke="#333333" stroke-width="0.25">24.0347</text>
<text transform="translate(1276.06 1156.90) scale(0.9629 1)" font-size="25.32" font-weight="normal" fill="#333333" stroke="#333333" stroke-width="0.25">23.2837</text>
<text transform="translate(1411.16 1156.90) scale(0.9629 1)" font-size="25.32" font-weight="normal" fill="#333333" stroke="#333333" stroke-width="0.25">19.8491</text>
<text transform="translate(1545.08 1156.90) scale(0.9629 1)" font-size="25.32" font-weight="normal" fill="#333333" stroke="#333333" stroke-width="0.25">19.3374</text>
<text transform="translate(1680.76 1156.90) scale(0.9629 1)" font-size="25.32" font-weight="normal" fill="#333333" stroke="#333333" stroke-width="0.25">19.2597</text>
<text transform="translate(43.38 1226.05) scale(0.9401 1)" font-size="25.32" font-weight="normal" fill="#333333" stroke="#333333" stroke-width="0.25">C00881</text>
<text transform="translate(165.48 1226.05) scale(0.9629 1)" font-size="25.32" font-weight="normal" fill="#333333" stroke="#333333" stroke-width="0.25">21.7830</text>
<text transform="translate(287.86 1226.05) scale(0.9629 1)" font-size="25.32" font-weight="normal" fill="#333333" stroke="#333333" stroke-width="0.25">23.3635</text>
<text transform="translate(409.86 1226.05) scale(0.9629 1)" font-size="25.32" font-weight="normal" fill="#333333" stroke="#333333" stroke-width="0.25">22.8273</text>
<text transform="translate(531.86 1226.05) scale(0.9629 1)" font-size="25.32" font-weight="normal" fill="#333333" stroke="#333333" stroke-width="0.25">21.1649</text>
<text transform="translate(653.86 1226.05) scale(0.9629 1)" font-size="25.32" font-weight="normal" fill="#333333" stroke="#333333" stroke-width="0.25">20.4285</text>
<text transform="translate(775.48 1226.05) scale(0.9629 1)" font-size="25.32" font-weight="normal" fill="#333333" stroke="#333333" stroke-width="0.25">22.0760</text>
<text transform="translate(897.86 1226.05) scale(0.9629 1)" font-size="25.32" font-weight="normal" fill="#333333" stroke="#333333" stroke-width="0.25">21.4177</text>
<text transform="translate(1019.86 1226.05) scale(0.9629 1)" font-size="25.32" font-weight="normal" fill="#333333" stroke="#333333" stroke-width="0.25">19.5562</text>
<text transform="translate(1141.86 1226.05) scale(0.9629 1)" font-size="25.32" font-weight="normal" fill="#333333" stroke="#333333" stroke-width="0.25">21.8337</text>
<text transform="translate(1276.06 1226.05) scale(0.9629 1)" font-size="25.32" font-weight="normal" fill="#333333" stroke="#333333" stroke-width="0.25">23.8677</text>
<text transform="translate(1411.16 1226.05) scale(0.9629 1)" font-size="25.32" font-weight="normal" fill="#333333" stroke="#333333" stroke-width="0.25">20.3853</text>
<text transform="translate(1545.46 1226.05) scale(0.9629 1)" font-size="25.32" font-weight="normal" fill="#333333" stroke="#333333" stroke-width="0.25">18.0789</text>
<text transform="translate(1680.76 1226.05) scale(0.9629 1)" font-size="25.32" font-weight="normal" fill="#333333" stroke="#333333" stroke-width="0.25">20.1853</text>
<text transform="translate(27.22 1331.80) scale(0.9744 1)" font-size="25.60" font-weight="normal" fill="#333333" stroke="#333333" stroke-width="0.25">Showing 1 to 10 of 30 entries</text>
<text transform="translate(1349.11 1334.10) scale(0.9430 1)" font-size="25.32" font-weight="bold" fill="#666666" stroke="#666666" stroke-width="0.40">Previous</text>
<text transform="translate(1508.53 1334.10) scale(0.9268 1)" font-size="25.32" font-weight="bold" fill="#333333" stroke="#333333" stroke-width="0.40">1</text>
<text transform="translate(1580.62 1334.10) scale(0.9795 1)" font-size="25.32" font-weight="bold" fill="#333333" stroke="#333333" stroke-width="0.40">2</text>
<text transform="translate(1653.33 1334.10) scale(0.9268 1)" font-size="25.32" font-weight="bold" fill="#333333" stroke="#333333" stroke-width="0.40">3</text>
<text transform="translate(1726.09 1334.10) scale(0.9572 1)" font-size="25.32" font-weight="bold" fill="#333333" stroke="#333333" stroke-width="0.40">Next</text>
</svg>
</body></html>
